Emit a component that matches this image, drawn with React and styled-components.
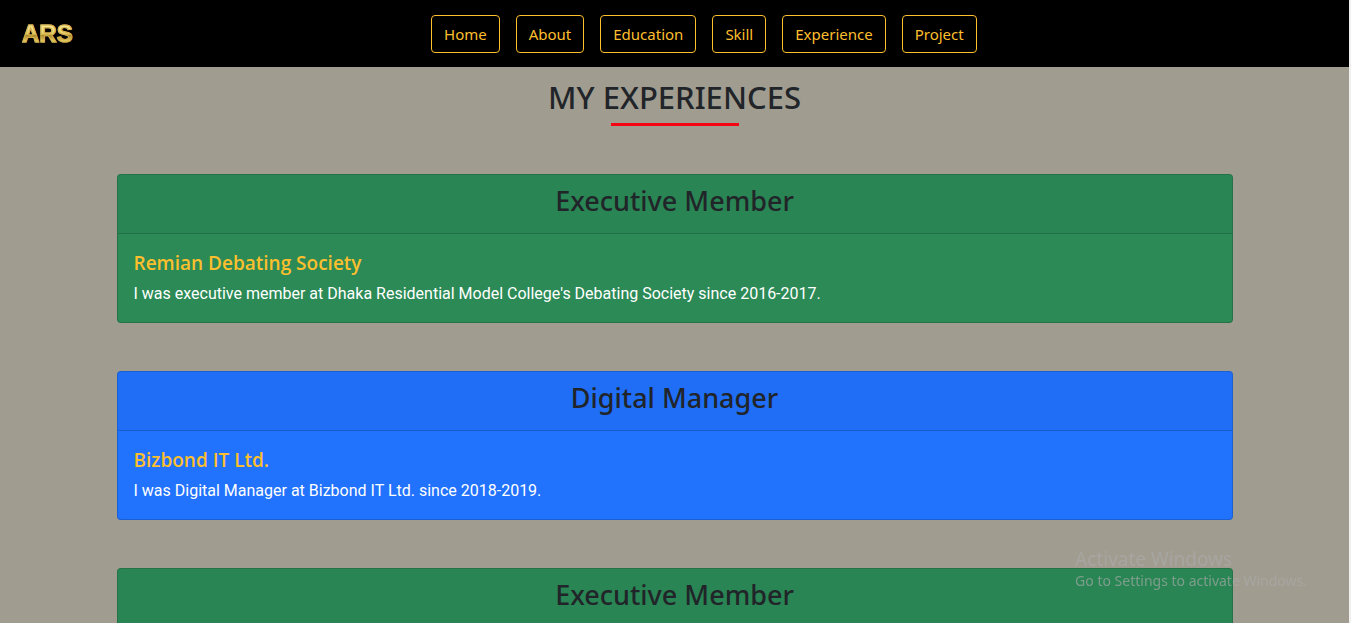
import React from "react";
import styled, { createGlobalStyle } from "styled-components";

const ui = '"Open Sans", "Noto Sans", sans-serif';
const gold = "#fdbf2d";

const GlobalStyle = createGlobalStyle`
  *, *::before, *::after { box-sizing: border-box; }
  html { scrollbar-width: none; }
  body {
    margin: 0;
    background: #a09c8f;
    color: #212529;
    font-family: ${ui};
    font-size: 16px;
    line-height: 24px;
  }
  h1, h2, h3, p { margin: 0; }
`;

const Page = styled.div`
  min-height: 100vh;
  border-right: 2px solid #f0f0ee;
  background: #a09c8f;
`;

const NavBar = styled.header`
  display: flex;
  align-items: center;
  min-height: 67px;
  padding: 14px 14px 14px 22px;
  background: #000;
`;

const Brand = styled.a`
  font-family: "Liberation Sans", Arial, sans-serif;
  font-size: 24px;
  line-height: 24px;
  font-weight: 700;
  text-decoration: none;
  color: transparent;
  background: linear-gradient(#f6e692 20%, #e3cb62 50%, #a8842a 56%, #f0dc70 84%);
  background-clip: text;
  -webkit-text-stroke: 1px #d3ae48;
`;

const NavLinks = styled.nav`
  display: flex;
  flex: 1;
  flex-wrap: wrap;
  justify-content: center;
  gap: 16px;
`;

const NavButton = styled.button`
  height: 38px;
  padding: 0 12px;
  border: 1px solid ${gold};
  border-radius: 4px;
  background: transparent;
  color: ${gold};
  font-family: "Noto Sans", "Open Sans", sans-serif;
  font-size: 15px;
  line-height: 24px;
  cursor: pointer;
`;

const Container = styled.main`
  max-width: 1140px;
  margin: 0 auto;
  padding: 11px 12px 48px;
`;

const SectionTitle = styled.h1`
  text-align: center;
  font-family: "Noto Sans", "Open Sans", sans-serif;
  font-size: 31px;
  line-height: 38px;
  font-weight: 500;
`;

const Underline = styled.div`
  width: 128px;
  height: 3px;
  margin: 7px auto 48px;
  background: #f50514;
`;

const CardList = styled.div`
  display: flex;
  flex-direction: column;
  gap: 48px;
`;

const Card = styled.article`
  border: 1px solid rgba(0, 0, 0, 0.16);
  border-radius: 4px;
  background: ${(p) => p.$color};
  overflow: hidden;
`;

const CardHeader = styled.header`
  padding: 8px 16px 14px;
  border-bottom: 1px solid rgba(0, 0, 0, 0.16);
  background: rgba(0, 0, 0, 0.03);
  text-align: center;
`;

const Role = styled.h2`
  font-family: "Noto Sans", "Open Sans", sans-serif;
  font-size: 27px;
  line-height: 36px;
  font-weight: 500;
`;

const CardBody = styled.div`
  display: flex;
  flex-direction: column;
  gap: 6px;
  padding: 16px;
`;

const Company = styled.h3`
  color: ${gold};
  font-size: 19px;
  line-height: 26px;
  font-weight: 600;
`;

const Description = styled.p`
  color: #fff;
  font-family: Roboto, sans-serif;
`;

const Watermark = styled.aside`
  position: fixed;
  right: 44px;
  bottom: 32px;
  color: rgba(170, 170, 170, 0.65);
  font-family: "Noto Sans", "Open Sans", sans-serif;
  pointer-events: none;
`;

const WatermarkTitle = styled.p`
  font-size: 19px;
  line-height: 24px;
`;

const WatermarkText = styled.p`
  font-size: 14px;
  line-height: 20px;
`;

const links = ["Home", "About", "Education", "Skill", "Experience", "Project"];
const green = "#2b8a56";
const blue = "#2172fd";

const experiences = [
  {
    role: "Executive Member",
    company: "Remian Debating Society",
    text: "I was executive member at Dhaka Residential Model College's Debating Society since 2016-2017.",
    color: green,
  },
  {
    role: "Digital Manager",
    company: "Bizbond IT Ltd.",
    text: "I was Digital Manager at Bizbond IT Ltd. since 2018-2019.",
    color: blue,
  },
  { role: "Executive Member", color: green },
];

export default function App() {
  return (
    <Page>
      <GlobalStyle />
      <NavBar>
        <Brand href="#home">ARS</Brand>
        <NavLinks>
          {links.map((label) => (
            <NavButton key={label} type="button">{label}</NavButton>
          ))}
        </NavLinks>
      </NavBar>
      <Container>
        <SectionTitle>MY EXPERIENCES</SectionTitle>
        <Underline />
        <CardList>
          {experiences.map((item, i) => (
            <Card key={i} $color={item.color}>
              <CardHeader>
                <Role>{item.role}</Role>
              </CardHeader>
              {item.company && (
                <CardBody>
                  <Company>{item.company}</Company>
                  <Description>{item.text}</Description>
                </CardBody>
              )}
            </Card>
          ))}
        </CardList>
      </Container>
      <Watermark>
        <WatermarkTitle>Activate Windows</WatermarkTitle>
        <WatermarkText>Go to Settings to activate Windows.</WatermarkText>
      </Watermark>
    </Page>
  );
}
